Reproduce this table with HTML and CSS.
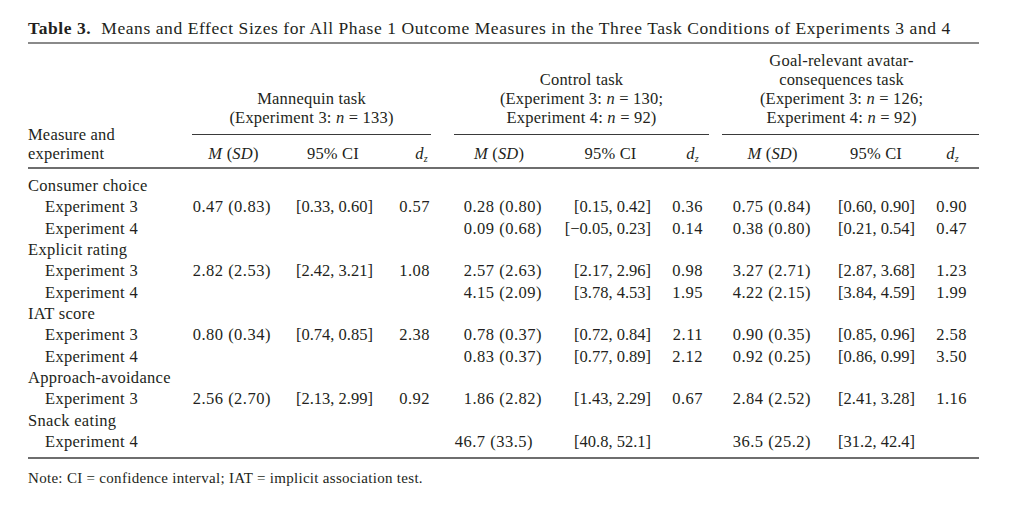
FILE: index.html
```html
<!DOCTYPE html>
<html lang="en">
<head>
<meta charset="utf-8">
<title>Table 3</title>
<link rel="stylesheet" href="styles.css">
</head>
<body>
<div class="page">
  <div class="title"><b>Table 3.</b>&nbsp; Means and Effect Sizes for All Phase 1 Outcome Measures in the Three Task Conditions of Experiments 3 and 4</div>
  <table class="tbl">
    <colgroup>
      <col class="w-label">
      <col class="w-c2"><col class="w-c3"><col class="w-c4">
      <col class="w-c5"><col class="w-c6"><col class="w-c7">
      <col class="w-c8"><col class="w-c9"><col class="w-c10">
    </colgroup>
    <thead>
      <tr class="row-groups">
        <th class="label-head" rowspan="2">Measure and<br>experiment</th>
        <th class="grp grp-mann" colspan="3"><div class="grp-text">Mannequin task<br>(Experiment 3: <i>n</i> = 133)</div></th>
        <th class="grp grp-ctrl" colspan="3"><div class="grp-text">Control task<br>(Experiment 3: <i>n</i> = 130;<br>Experiment 4: <i>n</i> = 92)</div></th>
        <th class="grp grp-goal" colspan="3"><div class="grp-text">Goal-relevant avatar-<br>consequences task<br>(Experiment 3: <i>n</i> = 126;<br>Experiment 4: <i>n</i> = 92)</div></th>
      </tr>
      <tr class="row-cols">
        <th class="h2"><i>M</i> (<i>SD</i>)</th><th class="h3">95% CI</th><th class="h4"><i>d</i><sub><i>z</i></sub></th>
        <th class="h5"><i>M</i> (<i>SD</i>)</th><th class="h6">95% CI</th><th class="h7"><i>d</i><sub><i>z</i></sub></th>
        <th class="h8"><i>M</i> (<i>SD</i>)</th><th class="h9">95% CI</th><th class="h10"><i>d</i><sub><i>z</i></sub></th>
      </tr>
    </thead>
    <tbody>
      <tr class="first"><td class="cat" colspan="10">Consumer choice</td></tr>
      <tr><td class="sub">Experiment 3</td><td>0.47 (0.83)</td><td>[0.33, 0.60]</td><td>0.57</td><td>0.28 (0.80)</td><td>[0.15, 0.42]</td><td>0.36</td><td>0.75 (0.84)</td><td>[0.60, 0.90]</td><td>0.90</td></tr>
      <tr><td class="sub">Experiment 4</td><td></td><td></td><td></td><td>0.09 (0.68)</td><td>[&minus;0.05, 0.23]</td><td>0.14</td><td>0.38 (0.80)</td><td>[0.21, 0.54]</td><td>0.47</td></tr>
      <tr><td class="cat" colspan="10">Explicit rating</td></tr>
      <tr><td class="sub">Experiment 3</td><td>2.82 (2.53)</td><td>[2.42, 3.21]</td><td>1.08</td><td>2.57 (2.63)</td><td>[2.17, 2.96]</td><td>0.98</td><td>3.27 (2.71)</td><td>[2.87, 3.68]</td><td>1.23</td></tr>
      <tr><td class="sub">Experiment 4</td><td></td><td></td><td></td><td>4.15 (2.09)</td><td>[3.78, 4.53]</td><td>1.95</td><td>4.22 (2.15)</td><td>[3.84, 4.59]</td><td>1.99</td></tr>
      <tr><td class="cat" colspan="10">IAT score</td></tr>
      <tr><td class="sub">Experiment 3</td><td>0.80 (0.34)</td><td>[0.74, 0.85]</td><td>2.38</td><td>0.78 (0.37)</td><td>[0.72, 0.84]</td><td>2.11</td><td>0.90 (0.35)</td><td>[0.85, 0.96]</td><td>2.58</td></tr>
      <tr><td class="sub">Experiment 4</td><td></td><td></td><td></td><td>0.83 (0.37)</td><td>[0.77, 0.89]</td><td>2.12</td><td>0.92 (0.25)</td><td>[0.86, 0.99]</td><td>3.50</td></tr>
      <tr><td class="cat" colspan="10">Approach-avoidance</td></tr>
      <tr><td class="sub">Experiment 3</td><td>2.56 (2.70)</td><td>[2.13, 2.99]</td><td>0.92</td><td>1.86 (2.82)</td><td>[1.43, 2.29]</td><td>0.67</td><td>2.84 (2.52)</td><td>[2.41, 3.28]</td><td>1.16</td></tr>
      <tr><td class="cat" colspan="10">Snack eating</td></tr>
      <tr class="last"><td class="sub">Experiment 4</td><td></td><td></td><td></td><td class="wide">46.7 (33.5)</td><td>[40.8, 52.1]</td><td></td><td>36.5 (25.2)</td><td>[31.2, 42.4]</td><td></td></tr>
    </tbody>
  </table>
  <p class="note">Note: CI = confidence interval; IAT = implicit association test.</p>
</div>
</body>
</html>
```

FILE: styles.css
```css
html, body {
  margin: 0;
  padding: 0;
  background: #ffffff;
}

.page {
  width: 951px;
  padding: 18px 0 0 28px;
  font-family: "Liberation Serif", "Times New Roman", serif;
  color: #231f20;
}

.title {
  font-size: 17.5px;
  line-height: 20px;
  letter-spacing: 0.58px;
  padding-bottom: 4px;
  border-bottom: 2px solid #8a8a8a;
  white-space: nowrap;
}

.title b {
  font-weight: bold;
}

.tbl {
  width: 951px;
  table-layout: fixed;
  border-collapse: separate;
  border-spacing: 0;
  font-size: 16.5px;
}

.w-label { width: 157px; }
.w-c2 { width: 98px; }
.w-c3 { width: 102px; }
.w-c4 { width: 58px; }
.w-c5 { width: 117px; }
.w-c6 { width: 105px; }
.w-c7 { width: 55px; }
.w-c8 { width: 105px; }
.w-c9 { width: 103px; }
.w-c10 { width: 51px; }

.tbl th {
  font-weight: normal;
  line-height: 19px;
  padding: 0;
  letter-spacing: 0.2px;
}

.label-head {
  text-align: left;
  vertical-align: bottom;
  padding-bottom: 4px !important;
  border-bottom: 2px solid #6e6e6e;
}

.grp {
  vertical-align: bottom;
  text-align: center;
  padding-top: 7px !important;
}

.grp-text {
  padding-bottom: 7px;
  border-bottom: 1px solid #3a3a3a;
}

.grp-mann { padding-left: 7px !important; padding-right: 12px !important; }
.grp-ctrl { padding-left: 11px !important; padding-right: 11px !important; }
.grp-goal { padding-left: 2px !important; padding-right: 0 !important; }
.grp-goal .grp-text { padding-right: 18px; }

.row-cols th {
  text-align: center;
  padding-top: 9px;
  padding-bottom: 4px;
  border-bottom: 2px solid #6e6e6e;
}

.row-cols .h2 { padding-right: 1px; }
.row-cols .h3 { padding-right: 2px; }
.row-cols .h4 { padding-left: 15px; }
.row-cols .h5 { padding-right: 5px; }
.row-cols .h6 { padding-right: 4px; }
.row-cols .h9 { padding-right: 1px; }
.row-cols .h10 { padding-right: 2px; }

sub {
  font-size: 10px;
  line-height: 0;
  vertical-align: -3px;
}

.tbl td {
  line-height: 21.333px;
  padding: 0;
  text-align: right;
  letter-spacing: 0.5px;
  white-space: nowrap;
}

.tbl td.cat,
.tbl td.sub {
  text-align: left;
  letter-spacing: 0.3px;
}

.tbl td.sub {
  padding-left: 17px;
}

.tbl td:nth-child(2) { padding-right: 12px; }
.tbl td:nth-child(3) { padding-right: 12px; letter-spacing: 0; }
.tbl td:nth-child(4) { padding-right: 13px; }
.tbl td:nth-child(5) { padding-right: 18px; }
.tbl td:nth-child(6) { padding-right: 14px; letter-spacing: 0; }
.tbl td:nth-child(7) { padding-right: 17px; }
.tbl td:nth-child(8) { padding-right: 14px; }
.tbl td:nth-child(9) { padding-right: 13px; letter-spacing: 0; }
.tbl td:nth-child(10) { padding-right: 12px; }

.tbl td.wide { padding-right: 27px; }

.first td { padding-top: 6px; }

.last td {
  padding-bottom: 4.5px;
  border-bottom: 2px solid #6e6e6e;
}

.note {
  margin: 10px 0 0 0;
  font-size: 15px;
  line-height: 18px;
  letter-spacing: 0.3px;
}
```
